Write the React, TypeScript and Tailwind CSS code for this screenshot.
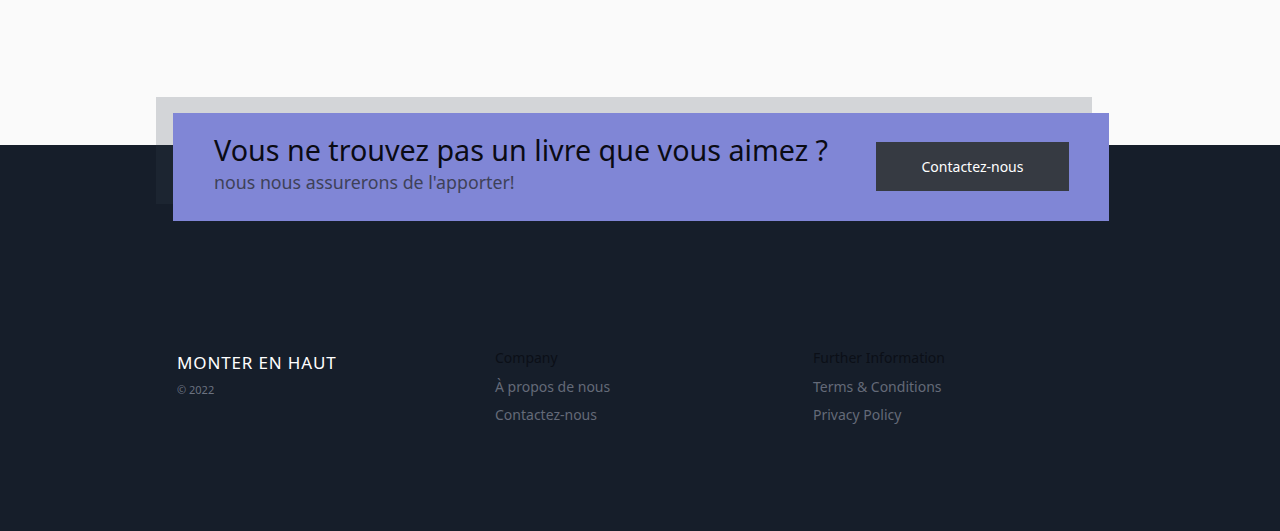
export default function App() {
  const font = { fontFamily: '"Noto Sans", "Open Sans", sans-serif' };
  return (
    <div className="min-h-[531px] w-full bg-[#161e2a]" style={font}>
      <div className="h-[145px] bg-[#fafafa]" />
      <div className="relative mx-auto -mt-[32px] ml-[173px] w-[936px]">
        <div className="absolute -left-[17px] -top-[16px] h-[107px] w-[936px] bg-[#374151]/20" />
        <div className="relative flex h-[108px] items-center justify-between bg-[#8086d6] pl-[41px] pr-[40px]">
          <div className="-mt-[8px] flex flex-col">
            <div className="text-[28.7px] leading-[36px] text-[#0a0b14]">Vous ne trouvez pas un livre que vous aimez ?</div>
            <div className="mt-[2px] text-[17.8px] leading-[24px] text-[#3e4158]">nous nous assurerons de l'apporter!</div>
          </div>
          <button className="mb-[2px] h-[49px] w-[193px] bg-[#363a42] text-[14px] text-white">Contactez-nous</button>
        </div>
      </div>
      <div className="ml-[177px] mt-[127px] grid grid-cols-[318px_318px_1fr] pb-[100px]">
        <div className="pt-[3px]">
          <div className="text-[17px] leading-[24px] tracking-[0.05em] text-white">MONTER EN HAUT</div>
          <div className="mt-[7px] text-[11px] text-[#6b7280]">© 2022</div>
        </div>
        <div className="flex flex-col gap-[8.5px] text-[14px] leading-[20px]">
          <div className="text-[#0b0f17]">Company</div>
          <div className="text-[#646a78]">À propos de nous</div>
          <div className="text-[#646a78]">Contactez-nous</div>
        </div>
        <div className="flex flex-col gap-[8.5px] text-[14px] leading-[20px]">
          <div className="text-[#0b0f17]">Further Information</div>
          <div className="text-[#646a78]">Terms &amp; Conditions</div>
          <div className="text-[#646a78]">Privacy Policy</div>
        </div>
      </div>
    </div>
  );
}
